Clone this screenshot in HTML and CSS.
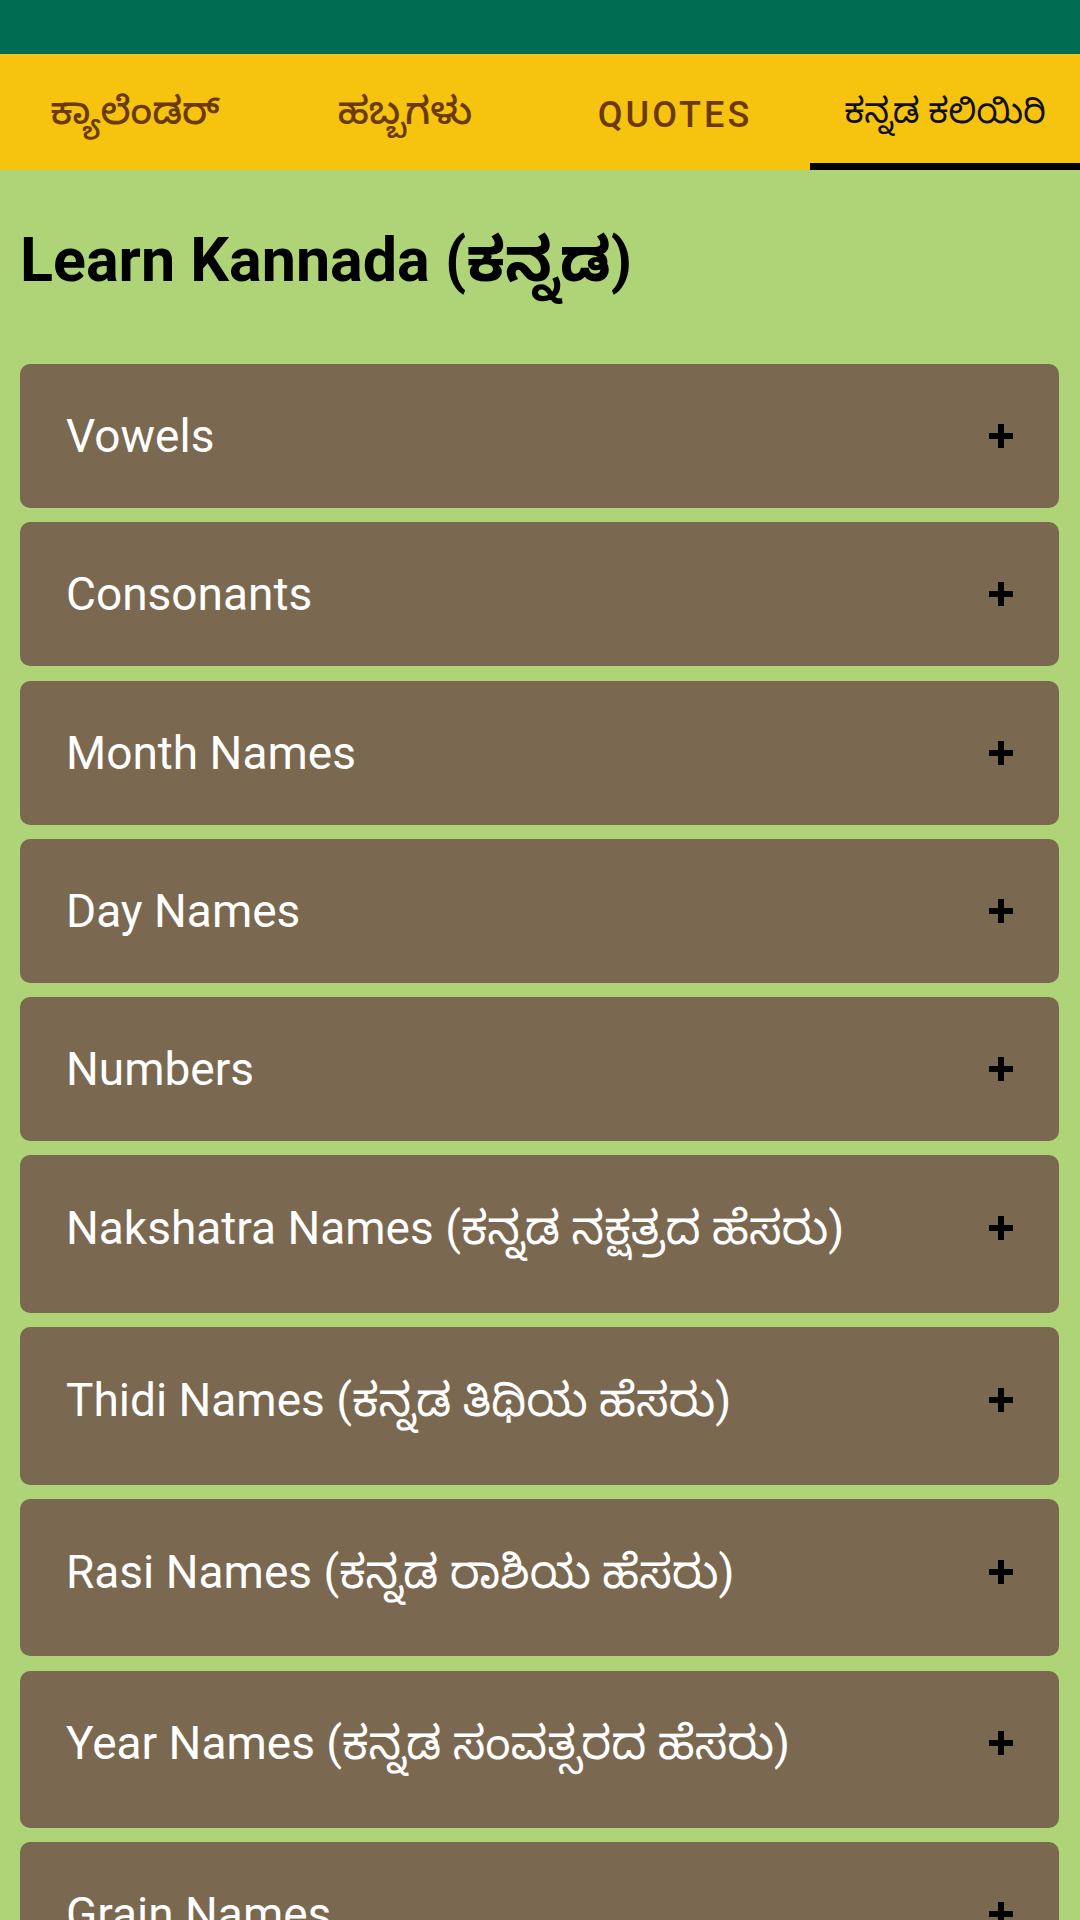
FILE: index.html
```html
<!DOCTYPE html>
<html lang="kn">
<head>
  <meta charset="UTF-8">
  <title>Learn Kannada</title>
  <link rel="stylesheet" href="styles.css">
</head>
<body>

<div class="screen">
  <div class="status-bar"></div>

  <div class="tabs">
    <div class="tab">ಕ್ಯಾಲೆಂಡರ್</div>
    <div class="tab">ಹಬ್ಬಗಳು</div>
    <div class="tab latin">QUOTES</div>
    <div class="tab active">ಕನ್ನಡ ಕಲಿಯಿರಿ</div>
  </div>

  <h1 class="page-title">Learn Kannada (ಕನ್ನಡ)</h1>

  <div class="topic-list">
    <div class="topic"><span>Vowels</span><svg class="plus" viewBox="0 0 24 24"><rect x="9" y="0" width="6" height="24"/><rect x="0" y="9" width="24" height="6"/></svg></div>
    <div class="topic"><span>Consonants</span><svg class="plus" viewBox="0 0 24 24"><rect x="9" y="0" width="6" height="24"/><rect x="0" y="9" width="24" height="6"/></svg></div>
    <div class="topic"><span>Month Names</span><svg class="plus" viewBox="0 0 24 24"><rect x="9" y="0" width="6" height="24"/><rect x="0" y="9" width="24" height="6"/></svg></div>
    <div class="topic"><span>Day Names</span><svg class="plus" viewBox="0 0 24 24"><rect x="9" y="0" width="6" height="24"/><rect x="0" y="9" width="24" height="6"/></svg></div>
    <div class="topic"><span>Numbers</span><svg class="plus" viewBox="0 0 24 24"><rect x="9" y="0" width="6" height="24"/><rect x="0" y="9" width="24" height="6"/></svg></div>
    <div class="topic kn"><span>Nakshatra Names (ಕನ್ನಡ ನಕ್ಷತ್ರದ ಹೆಸರು)</span><svg class="plus" viewBox="0 0 24 24"><rect x="9" y="0" width="6" height="24"/><rect x="0" y="9" width="24" height="6"/></svg></div>
    <div class="topic kn"><span>Thidi Names (ಕನ್ನಡ ತಿಥಿಯ ಹೆಸರು)</span><svg class="plus" viewBox="0 0 24 24"><rect x="9" y="0" width="6" height="24"/><rect x="0" y="9" width="24" height="6"/></svg></div>
    <div class="topic kn"><span>Rasi Names (ಕನ್ನಡ ರಾಶಿಯ ಹೆಸರು)</span><svg class="plus" viewBox="0 0 24 24"><rect x="9" y="0" width="6" height="24"/><rect x="0" y="9" width="24" height="6"/></svg></div>
    <div class="topic kn"><span>Year Names (ಕನ್ನಡ ಸಂವತ್ಸರದ ಹೆಸರು)</span><svg class="plus" viewBox="0 0 24 24"><rect x="9" y="0" width="6" height="24"/><rect x="0" y="9" width="24" height="6"/></svg></div>
    <div class="topic"><span>Grain Names</span><svg class="plus" viewBox="0 0 24 24"><rect x="9" y="0" width="6" height="24"/><rect x="0" y="9" width="24" height="6"/></svg></div>
  </div>
</div>

</body>
</html>
```

FILE: styles.css
```css
body {
  margin: 0;
  font-family: Roboto, "Noto Sans Kannada", "Noto Sans Kannada UI", "Lohit Kannada", "Tunga", sans-serif;
  background-color: #aed477;
}
.screen {
  height: 1920px;
  overflow: hidden;
}
.status-bar {
  height: 54px;
  background-color: #006c51;
}
.tabs {
  display: grid;
  grid-template-columns: repeat(4, 1fr);
  height: 116px;
  background-color: #f6c30f;
}
.tab {
  display: flex;
  align-items: center;
  justify-content: center;
  box-sizing: border-box;
  padding-top: 9px;
  font-size: 38px;
  font-weight: 500;
  color: #6b3a08;
}
.tab.latin {
  padding-top: 5px;
  font-size: 36px;
  letter-spacing: 3px;
}
.tab.active {
  padding-top: 15px;
  font-size: 35px;
  font-weight: 400;
  color: #111;
  border-bottom: 7px solid #000;
}
.page-title {
  margin: 0;
  padding: 50px 20px 0;
  font-size: 61px;
  font-weight: 700;
  line-height: 80px;
  color: #000;
}
.topic-list {
  display: flex;
  flex-direction: column;
  gap: 14.25px;
  margin-top: 64px;
  padding: 0 21px 0 20px;
}
.topic {
  display: flex;
  align-items: center;
  justify-content: space-between;
  box-sizing: border-box;
  min-height: 144px;
  padding: 0 46px 0 46px;
  background-color: #7b6850;
  border-radius: 10px;
  color: #fff;
  font-size: 46px;
  line-height: 54px;
}
.topic.kn {
  min-height: 157.5px;
  padding-bottom: 12px;
}
.plus {
  width: 24px;
  height: 24px;
  fill: #000;
  flex-shrink: 0;
}
```
